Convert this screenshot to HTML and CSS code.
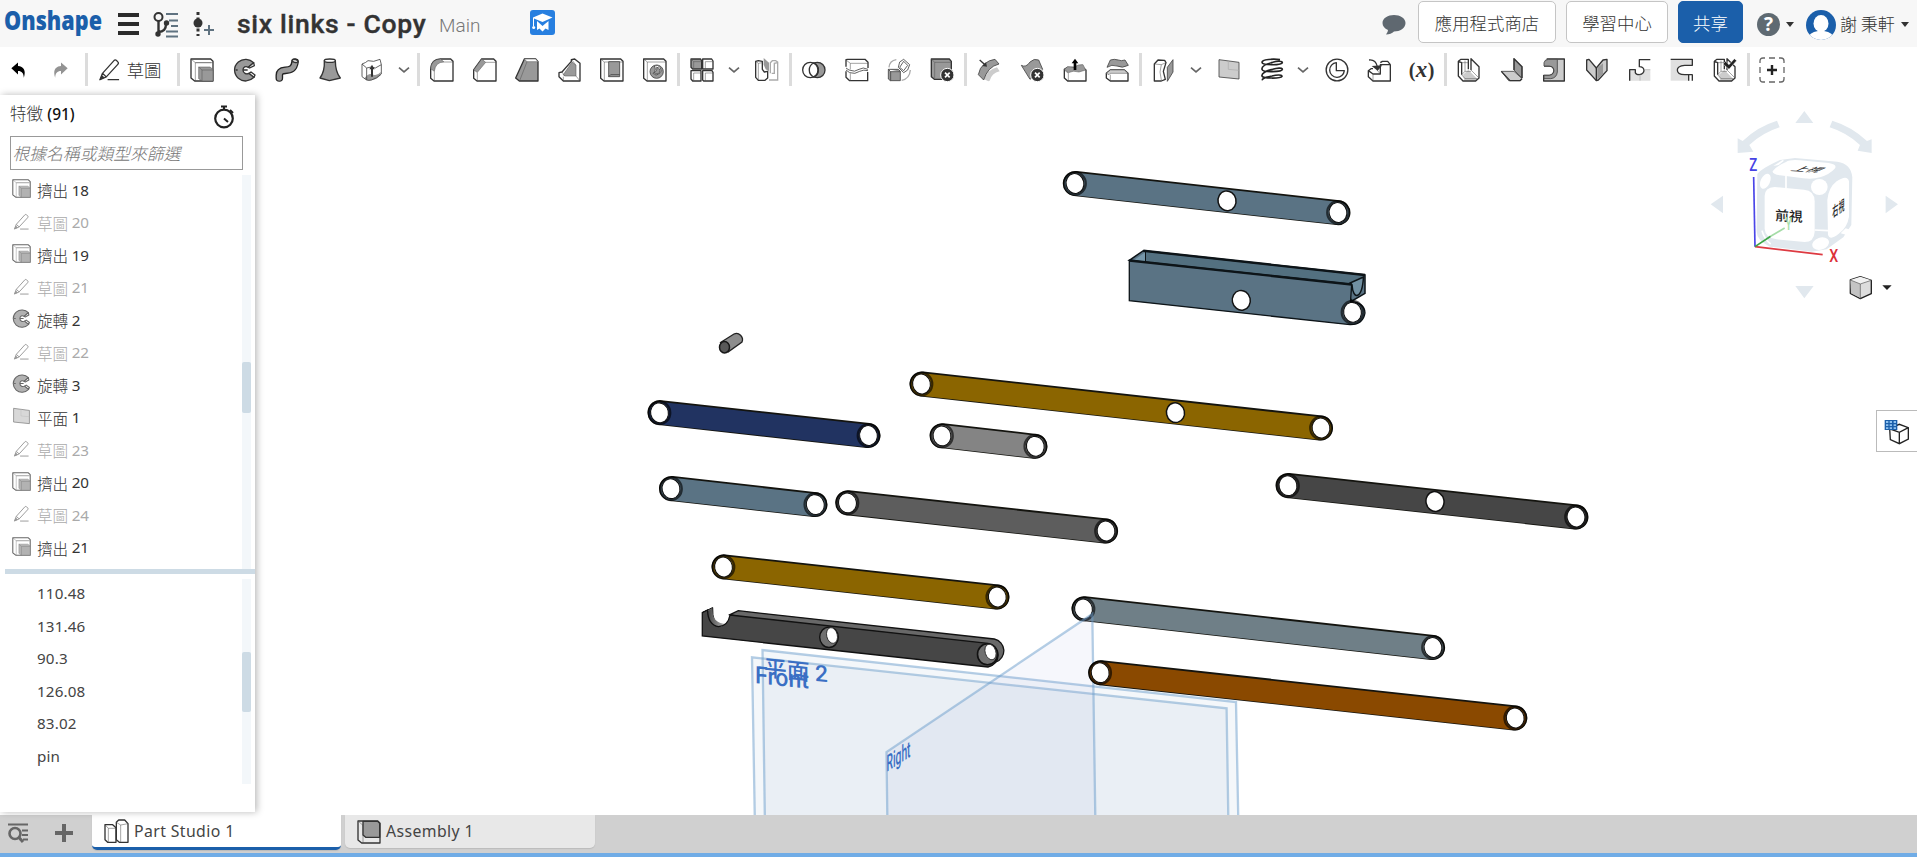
FILE: index.html
```html
<!DOCTYPE html>
<html lang="zh-Hant">
<head>
<meta charset="utf-8">
<title>six links - Copy</title>
<link rel="stylesheet" href="styles.css">
</head>
<body>
<svg class="defs" width="0" height="0">
<defs>
<symbol id="undo" viewBox="0 0 72 72"><path d="M12 30L36 9V22C56 23 66 38 57 64C56 48 50 40 36 40V52Z"/></symbol>
<symbol id="pencil" viewBox="0 0 72 72"><path class="k" d="M6 68L14 48L50 8Q54 4 58 8L62 12Q66 16 62 20L26 59ZM14 48L26 59M30 68H66"/><path class="d" d="M5 69L12 53L21 62Z"/></symbol>
<symbol id="extrude" viewBox="0 0 72 72"><path class="k" d="M3 3H62L69 10V69H14L3 60Z"/><path class="t" d="M3 3L16 14V69M16 14H69M16 14H64"/><path class="g t" d="M26 27H60L69 34V69H36L26 62Z"/><path class="t" d="M26 27L36 36V69M36 36H69"/></symbol>
<symbol id="revolve" viewBox="0 0 72 72"><path class="g k" d="M62 14C50 2 30 0 16 12C0 26 2 48 16 61C30 73 50 71 63 58L48 46C40 50 30 46 30 36C30 27 38 23 46 28Z"/><path class="w k" d="M62 14L64 23L50 30L46 28ZM48 46L54 42L66 51L63 58Z"/><path class="k" d="M30 36H44M8 36H14"/></symbol>
<symbol id="sweep" viewBox="0 0 72 72"><path class="o" d="M13 60V52C13 40 20 38 31 37C48 36 57 32 60 12"/><path class="i" d="M13 61V52C13 40 20 38 31 37C48 36 57 32 60 14"/><ellipse class="w k" cx="60" cy="9" rx="9" ry="4" transform="rotate(12 60 9)"/></symbol>
<symbol id="loft" viewBox="0 0 72 72"><path class="g k" d="M19 8C20 28 16 46 6 60L34 68L67 60C56 46 52 28 52 8Z"/><ellipse class="w k" cx="35.500" cy="8" rx="16.500" ry="5"/></symbol>
<symbol id="thicken" viewBox="0 0 72 72"><path class="g" d="M12 62Q26 42 40 50Q52 54 62 42V52Q46 68 26 68Z"/><path class="k2" d="M6 18Q18 14 24 8Q40 14 60 4L64 20V48M6 18V56L20 66M64 48Q50 62 34 66Q26 68 20 66"/><path class="k2" d="M6 18L20 30Q34 24 46 30L64 20M20 30V66"/><path class="d" d="M36 20L44 34H39V56H33V34H28Z"/></symbol>
<symbol id="fillet" viewBox="0 0 72 72"><path class="k" d="M2 32Q4 4 32 3H62L69 10V69H12L2 61Z"/><path class="g t" d="M2 32Q4 4 32 3L42 12Q16 12 13 40Z"/><path class="t" d="M13 40V69M42 12H69L62 3"/></symbol>
<symbol id="chamfer" viewBox="0 0 72 72"><path class="k" d="M2 36L26 3H62L69 10V69H12L2 61Z"/><path class="g t" d="M2 36L26 3L38 13L13 43Z"/><path class="t" d="M13 43V69M38 13H69L62 3"/></symbol>
<symbol id="draft" viewBox="0 0 72 72"><path class="g k" d="M28 3H62L69 11V69H13L2 60Z"/><path class="w t" d="M28 3H62L69 11H36Z"/><path class="t" d="M36 11L14 68"/></symbol>
<symbol id="rib" viewBox="0 0 72 72"><path class="k" d="M40 10L40 5L50 3L66 16V69H16L3 56V44L12 42Z"/><path class="g t" d="M16 50L42 12L54 22V54H20Z"/><path class="t" d="M54 22L42 6M54 54L66 69M12 42L20 54M16 69V56"/></symbol>
<symbol id="shell" viewBox="0 0 72 72"><path class="k" d="M2 3H62L69 10V69H12L2 61Z"/><path class="t" d="M2 3L13 12H69M13 12V69"/><path class="g k2" d="M26 11H59V56H26ZM26 56L32 50H59"/></symbol>
<symbol id="hole" viewBox="0 0 72 72"><path class="k" d="M2 3H62L69 10V69H12L2 61Z"/><path class="t" d="M2 3L13 12H69M13 12V69"/><circle class="g k2" cx="41" cy="41" r="20"/><path class="w k2" d="M34 24A14 14 0 1 1 30 46A17 17 0 0 0 34 24Z"/><path class="g k2" d="M41 28A10 10 0 1 1 33 44A14 14 0 0 0 41 28Z"/></symbol>
<symbol id="pattern" viewBox="0 0 72 72"><path class="g k" d="M3 3H32L35 9V33H8L3 28Z"/><path class="k" d="M38 3H65L69 9V33H38ZM3 38H33V69H8L3 63ZM38 38H66L69 43V69H41L38 66Z"/><path class="t" d="M3 3L11 11H35M11 11V33M46 11H69M46 11V33M11 45H33M11 45V69M46 45H69M46 45V69"/></symbol>
<symbol id="mirror" viewBox="0 0 72 72"><path class="g" d="M26 0L42 14V40L32 34L26 20Z"/><path class="k" d="M2 10L10 8L22 10V34L28 42L38 40V60L30 67H10L2 58Z"/><path class="t" d="M10 16V66M10 16L2 10M10 16L22 14"/><path class="f" d="M42 66H68V12L62 8H52L46 14V46M50 46H58V16L68 14"/></symbol>
<symbol id="boolean" viewBox="0 0 72 72"><circle class="g k" cx="46" cy="36" r="23"/><circle class="w k" cx="25" cy="36" r="23"/><path class="k" d="M35.500 15A23 23 0 0 0 35.500 57A23 23 0 0 0 35.500 15Z"/></symbol>
<symbol id="split" viewBox="0 0 72 72"><path class="k" d="M3 26V5L8 4H60L69 13V30M3 40V58L14 68H68V42"/><path class="t" d="M3 6L16 16H69M16 16V34M16 46V68"/><path class="k2" d="M3 30L12 36Q30 44 42 34Q54 26 69 34M3 36L14 44Q30 50 44 40Q56 34 69 38"/></symbol>
<symbol id="transform" viewBox="0 0 72 72"><path class="g k2" d="M4 34H34L40 40V68H10L4 63ZM4 34L11 41H40M11 41V68"/><path class="k2" d="M50 4L68 20L62 36L50 44L34 28L38 12ZM50 10L62 22L50 38L38 28Z"/><path class="f" d="M6 28Q8 8 28 5M70 36Q68 62 44 67"/></symbol>
<symbol id="delpart" viewBox="0 0 72 72"><path class="g k" d="M4 3H58L64 10V64H13L4 56Z"/><path class="t" d="M4 3L14 13H64M14 13V60"/><circle class="d" cx="52" cy="51" r="20" stroke="#fff" stroke-width="3"/><path class="x" d="M45 44L59 58M59 44L45 58"/></symbol>
<symbol id="moveface" viewBox="0 0 72 72"><path class="lg" d="M34 70L22 64Q30 36 60 28L68 40Q44 46 38 68Z"/><path class="g k2" d="M4 50Q8 28 22 18Q36 6 54 4L66 18Q32 26 20 66Z"/><path class="k" d="M8 6L24 20"/><path class="d" d="M30 26L16 24L27 13Z"/></symbol>
<symbol id="delface" viewBox="0 0 72 72"><path class="g k2" d="M4 22Q18 30 30 12Q42 0 56 6L68 34Q54 34 44 52L30 64Z"/><circle class="d" cx="52" cy="51" r="20" stroke="#fff" stroke-width="3"/><path class="x" d="M45 44L59 58M59 44L45 58"/></symbol>
<symbol id="replace" viewBox="0 0 72 72"><path class="k" d="M4 34L14 28H58L69 36V69H14L4 60Z"/><path class="g t" d="M4 34L14 26L32 28Q46 18 60 20L68 36L48 42Q30 36 16 44Z"/><path class="t" d="M4 36L16 46V69"/><path class="b" d="M36 2L46 16H40V36H32V16H26Z"/></symbol>
<symbol id="offset" viewBox="0 0 72 72"><path class="k" d="M4 46L16 36H58L69 46V69H16L4 60Z"/><path class="lg t" d="M4 46L16 36H58L69 46H16L12 50Z"/><path class="g k2" d="M6 28L16 6Q28 2 40 6Q48 10 60 6L70 22Q52 32 36 24Q20 18 6 28Z"/><path class="t" d="M16 50V69"/></symbol>
<symbol id="splitpart" viewBox="0 0 72 72"><path class="k" d="M7 18L18 6L38 7L42 14L34 40L40 64L28 69H7Z"/><path class="t" d="M7 18L28 20L42 14M28 20L24 42L28 66"/><path class="g k2" d="M46 28L63 5V42L46 70Z"/></symbol>
<symbol id="plane" viewBox="0 0 72 72"><path class="lg k2" d="M6 5L66 13V63L6 57Z"/><path class="f2" d="M34 9V34L66 37"/></symbol>
<symbol id="helix" viewBox="0 0 72 72"><path class="h" d="M60 5C40 2 6 4 6 13C6 23 66 22 67 14C67 8 50 9 38 13C18 18 4 24 6 34C8 44 66 42 67 34C67 28 50 30 38 34C18 38 4 46 6 54C8 62 62 62 66 55C66 49 48 51 36 54C18 58 4 62 8 67"/></symbol>
<symbol id="clock" viewBox="0 0 72 72"><circle class="k" cx="36" cy="36" r="32.500"/><path class="k" d="M34 14V38H58A22 22 0 1 1 34 14Z"/></symbol>
<symbol id="derived" viewBox="0 0 72 72"><path class="k" d="M18 69L4 56V38L18 48H40V20H70V69ZM4 38L12 32H18M40 14L46 10H62L70 20"/><path class="t" d="M40 48L30 36M18 48V69"/><path class="k" d="M6 6Q26 4 31 26"/><path class="d" d="M14 24L46 22L32 38Z"/></symbol>
<symbol id="sheet" viewBox="0 0 72 72"><path class="lg" d="M18 50L34 36L62 64L56 68H22Z"/><path class="k" d="M4 10L12 4H34V34M42 36V2L66 26V60L56 69H18L4 54V10L14 14V50"/><path class="t" d="M14 14H34M24 8V40L14 50L24 62H60M42 36L66 60M24 40H42"/></symbol>
<symbol id="flange" viewBox="0 0 72 72"><path class="g k2" d="M42 2L66 26V60L42 36Z"/><path class="k" d="M42 36V2L66 26V60"/><path class="lg k2" d="M4 40H42L66 62L60 68H26Z"/><path class="k" d="M4 40L30 68H60L66 62"/></symbol>
<symbol id="hem" viewBox="0 0 72 72"><path class="lg k" d="M14 3H67V69H5V52H22Q36 50 36 36Q34 24 22 24H6"/><path class="g k2" d="M6 24V14Q8 4 20 4H46V42Q44 60 26 62H6V52H22Q36 50 36 36Q34 24 22 24Z"/></symbol>
<symbol id="bend" viewBox="0 0 72 72"><path class="lg k" d="M5 6L12 4L34 30L54 6L66 4V38L40 66L34 68L5 36Z"/><path class="k" d="M34 30V68"/><path class="g" d="M37 30L54 16V48L37 64Z"/></symbol>
<symbol id="tab" viewBox="0 0 72 72"><path class="lg" opacity=".6" d="M5 35H22Q24 50 34 50Q48 48 48 35H67V68H5Z"/><path class="k" d="M5 68V35H22V44Q24 50 34 50Q48 48 48 36Q46 26 34 26V5H67"/><path class="f2" d="M36 50V68M48 35H67"/></symbol>
<symbol id="relief" viewBox="0 0 72 72"><path class="lg" opacity=".6" d="M2 4H67V68H2Z"/><path class="w" d="M68 22H44Q22 24 22 36Q22 50 44 50H56V68H68Z"/><path class="k" d="M2 4H67V22H44Q22 24 22 36Q22 50 44 50H68M56 50V68M67 50V68"/></symbol>
<symbol id="finish" viewBox="0 0 72 72"><use href="#sheet"/><path d="M30 18L38 10L48 20L64 2L71 8L48 34Z" fill="#222" stroke="#fff" stroke-width="1.500"/></symbol>
<symbol id="chev" viewBox="0 0 36 36"><path d="M3 11L18 24L33 11" fill="none" stroke="#666" stroke-width="5"/></symbol>
</defs>
</svg>

<div class="app">
<header class="top">
  <svg class="logo" width="104" height="40"><text x="0" y="27" textLength="98" lengthAdjust="spacingAndGlyphs">Onshape</text></svg>
  <svg class="burger" width="21" height="22"><path d="M0 2H21M0 11H21M0 20H21" stroke="#2b2b2b" stroke-width="4.200"/></svg>
  <svg class="tree" width="26" height="26" fill="none"><circle cx="5.500" cy="5" r="4" stroke="#333" stroke-width="2"/><path d="M5.500 9V22M5.500 20Q13 20 13 12" stroke="#333" stroke-width="2.400"/><circle cx="5" cy="22" r="2.700" fill="#333"/><circle cx="13.500" cy="11" r="2.700" fill="#333"/><path d="M13 2H25M16 8.500H25M18 14H25M13 19.500H25M13 24.500H25" stroke="#5f7280" stroke-width="2"/></svg>
  <svg class="version" width="22" height="26"><circle cx="5" cy="11" r="4.500" fill="#333"/><path d="M5 0V24" stroke="#333" stroke-width="3" stroke-dasharray="3 2.500"/><path d="M11 18H21M16 13V23" stroke="#5f7280" stroke-width="2"/></svg>
  <h1>six links - Copy</h1>
  <span class="branch">Main</span>
  <svg class="learn" width="25" height="25"><rect width="25" height="25" rx="3" fill="#277fe0"/><path d="M12.500 3.500L22.500 7.500L12.500 12L4 8.500V16H3V7.500Z" fill="#fff"/><path d="M7 11V20L9.500 18.500L12.500 21.500L15.500 18.500L18.500 20V11L12.500 16Z" fill="#fff"/><circle cx="3.700" cy="17.500" r="1.500" fill="#fff"/></svg>
  <div class="spacer"></div>
  <svg class="chat" width="24" height="22"><path d="M12 1C18 1 23.500 4 23.500 9S18 17.500 12 17.500Q9 20.500 4 20.500Q6 18 6 16C2.500 14.500 .5 12 .5 9C.5 4 6 1 12 1Z" fill="#5f6870"/></svg>
  <button class="btn store">應用程式商店</button>
  <button class="btn learnbtn">學習中心</button>
  <button class="btn share">共享</button>
  <span class="help">?</span><i class="caret"></i>
  <svg class="avatar" width="30" height="30"><clipPath id="av"><circle cx="15" cy="15" r="15"/></clipPath><g clip-path="url(#av)"><rect width="30" height="30" fill="#1b5faa"/><ellipse cx="15" cy="13.500" rx="7.500" ry="8.500" fill="#fff"/><path d="M1 30Q3 22 12 21H18Q27 22 29 30Z" fill="#fff"/></g></svg>
  <span class="user">謝 秉軒</span><i class="caret"></i>
</header>

<nav class="toolbar">
  <span class="t1 small"><svg><use href="#undo"/></svg></span>
  <span class="t1 small redo"><svg><use href="#undo"/></svg></span>
  <i class="sep"></i>
  <span class="sketch"><svg><use href="#pencil"/></svg>草圖</span>
  <i class="sep"></i>
  <span class="t1"><svg><use href="#extrude"/></svg></span><span class="t1"><svg><use href="#revolve"/></svg></span><span class="t1"><svg><use href="#sweep"/></svg></span><span class="t1"><svg><use href="#loft"/></svg></span><span class="t1"><svg><use href="#thicken"/></svg></span><span class="drop"><svg><use href="#chev"/></svg></span>
  <i class="sep"></i>
  <span class="t1"><svg><use href="#fillet"/></svg></span><span class="t1"><svg><use href="#chamfer"/></svg></span><span class="t1"><svg><use href="#draft"/></svg></span><span class="t1"><svg><use href="#rib"/></svg></span><span class="t1"><svg><use href="#shell"/></svg></span><span class="t1"><svg><use href="#hole"/></svg></span>
  <i class="sep"></i>
  <span class="t1"><svg><use href="#pattern"/></svg></span><span class="drop"><svg><use href="#chev"/></svg></span><span class="t1"><svg><use href="#mirror"/></svg></span>
  <i class="sep"></i>
  <span class="t1"><svg><use href="#boolean"/></svg></span><span class="t1"><svg><use href="#split"/></svg></span><span class="t1"><svg><use href="#transform"/></svg></span><span class="t1"><svg><use href="#delpart"/></svg></span>
  <i class="sep"></i>
  <span class="t1"><svg><use href="#moveface"/></svg></span><span class="t1"><svg><use href="#delface"/></svg></span><span class="t1"><svg><use href="#replace"/></svg></span><span class="t1"><svg><use href="#offset"/></svg></span>
  <i class="sep"></i>
  <span class="t1"><svg><use href="#splitpart"/></svg></span><span class="drop"><svg><use href="#chev"/></svg></span><span class="t1"><svg><use href="#plane"/></svg></span><span class="t1"><svg><use href="#helix"/></svg></span><span class="drop"><svg><use href="#chev"/></svg></span><span class="t1"><svg><use href="#clock"/></svg></span><span class="t1"><svg><use href="#derived"/></svg></span><span class="t1 var">(<em>x</em>)</span>
  <i class="sep"></i>
  <span class="t1"><svg><use href="#sheet"/></svg></span><span class="t1"><svg><use href="#flange"/></svg></span><span class="t1"><svg><use href="#hem"/></svg></span><span class="t1"><svg><use href="#bend"/></svg></span><span class="t1"><svg><use href="#tab"/></svg></span><span class="t1"><svg><use href="#relief"/></svg></span><span class="t1"><svg><use href="#finish"/></svg></span>
  <i class="sep"></i>
  <span class="t1"><svg class="add" viewBox="0 0 26 26"><path d="M1 6V4Q1 1 4 1H6M10 1H16M20 1H22Q25 1 25 4V6M25 10V16M25 20V22Q25 25 22 25H20M16 25H10M6 25H4Q1 25 1 22V20M1 16V10" fill="none" stroke="#666" stroke-width="1.300"/><path d="M8 13H18M13 8V18" stroke="#222" stroke-width="2.400"/></svg></span>
</nav>

<main class="work">
  <aside class="side">
    <div class="sidehead"><span>特徵 <b>(91)</b></span><svg width="22" height="24" fill="none" stroke="#222"><circle cx="11" cy="13.500" r="8.800" stroke-width="2.200"/><path d="M8 1.500H14M11 2V5M17 5L20 8M11 13.500L15 17" stroke-width="2"/></svg></div>
    <input class="filter" placeholder="根據名稱或類型來篩選">
    <div class="pane features">
      <ul>
        <li><svg><use href="#extrude"/></svg>擠出 <span>18</span></li>
        <li class="off"><svg><use href="#pencil"/></svg>草圖 <span>20</span></li>
        <li><svg><use href="#extrude"/></svg>擠出 <span>19</span></li>
        <li class="off"><svg><use href="#pencil"/></svg>草圖 <span>21</span></li>
        <li><svg><use href="#revolve"/></svg>旋轉 <span>2</span></li>
        <li class="off"><svg><use href="#pencil"/></svg>草圖 <span>22</span></li>
        <li><svg><use href="#revolve"/></svg>旋轉 <span>3</span></li>
        <li><svg><use href="#plane"/></svg>平面 <span>1</span></li>
        <li class="off"><svg><use href="#pencil"/></svg>草圖 <span>23</span></li>
        <li><svg><use href="#extrude"/></svg>擠出 <span>20</span></li>
        <li class="off"><svg><use href="#pencil"/></svg>草圖 <span>24</span></li>
        <li><svg><use href="#extrude"/></svg>擠出 <span>21</span></li>
      </ul>
      <div class="track"><div class="thumb"></div></div>
    </div>
    <div class="divider"></div>
    <div class="pane parts">
      <ul><li>110.48</li><li>131.46</li><li>90.3</li><li>126.08</li><li>83.02</li><li>pin</li></ul>
      <div class="track"><div class="thumb"></div></div>
    </div>
  </aside>

  <section class="canvas">
  <svg class="scene" viewBox="255 95 1662 720" width="1662" height="720">
    <defs>
      <g id="ring"><ellipse cx="0" cy="0" rx="10.800" ry="11.400" fill="none" stroke="#000" stroke-opacity=".62" stroke-width="2.200"/><ellipse rx="8.900" ry="10" fill="#fff" stroke="#111" stroke-width="1.100" transform="rotate(-12)"/></g>
      <g id="mid"><ellipse rx="9" ry="9.900" fill="#fff" stroke="#111" stroke-width="1.500" transform="rotate(-12)"/></g>
      <linearGradient id="bore"><stop offset="0" stop-color="#444"/><stop offset="1" stop-color="#bbb"/></linearGradient>
    </defs>
    <!-- straight links: outline, face, bores -->
    <g class="link">
      <path class="e" d="M1075.300 183.500L1338 212.700"/><path d="M1075.300 184L1338 213.200" stroke="#5a7384"/>
      <path class="e" d="M922 384L1320.500 428"/><path d="M922 384.500L1320.500 428.500" stroke="#8b6500"/>
      <path class="e" d="M660 412.600L868 435.500"/><path d="M660 413.100L868 436" stroke="#213361"/>
      <path class="e" d="M942 435.700L1035 446.300"/><path d="M942 436.200L1035 446.800" stroke="#848484"/>
      <path class="e" d="M671.500 488.500L815 504.600"/><path d="M671.500 489L815 505.100" stroke="#5a7384"/>
      <path class="e" d="M847.700 502.700L1105.600 531"/><path d="M847.700 503.200L1105.600 531.500" stroke="#5d5d5d"/>
      <path class="e" d="M1288 485.500L1576 517"/><path d="M1288 486L1576 517.500" stroke="#464646"/>
      <path class="e" d="M724 566.800L997 597"/><path d="M724 567.300L997 597.500" stroke="#8b6500"/>
      <path class="e" d="M1084 608.700L1432.600 647.500"/><path d="M1084 609.200L1432.600 648" stroke="#6f7f87"/>
    </g>
    <use href="#ring" x="1075" y="183.500"/><use href="#mid" x="1227" y="200.800"/><use href="#ring" x="1338" y="212.500"/>
    <use href="#ring" x="921.500" y="384"/><use href="#mid" x="1175.500" y="412.700"/><use href="#ring" x="1321" y="428"/>
    <use href="#ring" x="659.500" y="412.800"/><use href="#ring" x="868.500" y="435.500"/>
    <use href="#ring" x="942" y="435.900"/><use href="#ring" x="1035.300" y="446.300"/>
    <use href="#ring" x="671" y="488.700"/><use href="#ring" x="815.300" y="504.600"/>
    <use href="#ring" x="847.500" y="502.900"/><use href="#ring" x="1106" y="531"/>
    <use href="#ring" x="1288" y="485.700"/><use href="#mid" x="1435" y="501.500"/><use href="#ring" x="1576" y="517"/>
    <use href="#ring" x="723.500" y="567"/><use href="#ring" x="997.300" y="597"/>
    <use href="#ring" x="1083.500" y="609"/><use href="#ring" x="1433" y="647.500"/>
    <!-- channel -->
    <path d="M1129.300 260.300L1143.300 250.700L1365 275V293.300L1352 301L1340 284Z" fill="#5a7384" stroke="#0d1418" stroke-width="1.500"/>
    <path d="M1134 260L1145.500 252V262Z" fill="#7697aa"/>
    <path d="M1145.500 252V262L1346 284L1363 276Z" fill="#537080"/>
    <path d="M1145.500 252V262" stroke="#0d1418" stroke-width="1"/>
    <path d="M1143.300 250.700L1365 275" stroke="#0d1418" stroke-width="2.400"/>
    <path d="M1352 285C1353 300 1362 300 1363.500 277L1350 283Z" fill="#7190a2" stroke="#0d1418" stroke-width="1.500"/>
    <path d="M1129.300 260.300L1351.700 284.300L1350.500 301.500Q1365 303 1365 313Q1363 325 1350 324.700L1129.300 300.700Z" fill="#5a7384" stroke="#0d1418" stroke-width="1.300"/>
    <path d="M1129.300 260.500L1351.700 284.500" stroke="#0d1418" stroke-width="2.400"/>
    <use href="#mid" x="1241.300" y="300.300"/><use href="#ring" x="1352.500" y="312.300"/>
    <!-- pin -->
    <path d="M720.500 342.500L734 334A5.500 6 -30 0 1 742 342L728 352Z" fill="#8d8d8d" stroke="#222" stroke-width="1.300"/>
    <ellipse cx="724.500" cy="347.300" rx="5" ry="5.700" fill="#595959" stroke="#181818" stroke-width="1.500"/>
    <!-- notched link -->
    <path d="M730 614.700L738.300 610.700L994.300 639A12 12 0 0 1 996 662L985 666Z" fill="#686868" stroke="#111" stroke-width="1.300"/>
    <path d="M702.300 612.700L712.700 607.500Q712 624 721 626L716 629Q704 624 706 611Z" fill="#777" stroke="#111"/>
    <path d="M712 608.500Q712 624 727 624L718 627.500Q706 624 708 611Z" fill="url(#bore)"/>
    <path d="M702.300 612.700L707.500 610Q708 625 718.500 626.700Q728 626 730 615L988 643.300A12 12 0 0 1 988 667L702.300 636Z" fill="#464646" stroke="#111" stroke-width="1.300"/>
    <g><ellipse cx="829" cy="637.300" rx="9.300" ry="10.200" fill="#707070" stroke="#111" stroke-width="1.400"/><ellipse cx="832" cy="635.500" rx="5.300" ry="8" fill="#fff" stroke="#222" stroke-width=".8" transform="rotate(-14 832 635.500)"/></g>
    <g><ellipse cx="987.500" cy="654.300" rx="10" ry="10.500" fill="#707070" stroke="#111" stroke-width="1.600"/><ellipse cx="990.500" cy="652" rx="5.300" ry="8" fill="#fff" stroke="#222" stroke-width=".8" transform="rotate(-18 990.500 652)"/></g>
    <!-- reference planes -->
    <g fill="#8fb4cc" fill-opacity=".1" stroke="#6c9dcc" stroke-opacity=".5" stroke-width="2.300">
      <path d="M755 830L752 657.300L1226.600 708.300L1228.500 830"/>
      <path d="M765 830L762.500 650L1236 702L1238.500 830"/>
      <path d="M887.500 830L886.500 752L1092.300 614L1095.500 830" fill="#98a8e0" fill-opacity=".09"/>
    </g>
    <g class="ptext">
      <text transform="translate(755 683) skewY(6)" font-size="24" textLength="54" lengthAdjust="spacingAndGlyphs">Front</text>
      <text transform="translate(764 675.500) skewY(6)" font-size="22.500" textLength="64" lengthAdjust="spacingAndGlyphs">平面 2</text>
      <text transform="translate(886.500 772) skewY(-33)" font-size="23" textLength="24" lengthAdjust="spacingAndGlyphs">Right</text>
    </g>
    <g class="link"><path class="e" d="M1100.600 672.700L1514.900 718"/><path d="M1100.600 673.200L1514.900 718.500" stroke="#8a4900"/></g>
    <use href="#ring" x="1100.200" y="672.700"/><use href="#ring" x="1515.200" y="718"/>
    <!-- view cube -->
    <g transform="translate(1680 100) scale(.3333)">
      <g fill="#e1e8ee">
        <path d="M373 33L400 69H346ZM373 595L401 558H346ZM92 313L129 287V340ZM654 313L617 287V340Z"/>
        <path d="M291 62L299 82Q248 98 208 135L220 155L173 159V115L188 123Q232 80 291 62ZM457 62L449 82Q500 98 540 135L533 152L575 159V118L561 123Q516 80 457 62Z"/>
        <path d="M232 222Q244 206 300 180L345 174L472 185Q514 192 517 232L514 375L490 412L440 448L395 455L270 440Q228 420 230 390Z"/>
      </g>
      <g fill="#fff">
        <path d="M278 214Q286 200 318 186Q330 178 360 181L446 189Q474 194 464 206Q450 222 420 232Q400 238 370 235L300 226Q276 222 278 214Z"/>
        <path d="M254 288Q254 262 284 261L372 269Q404 272 404 304V396Q402 426 374 426L290 418Q256 414 254 386Z"/>
        <path d="M442 300Q446 262 470 244Q502 222 507 244V350Q502 382 478 400Q450 424 444 404Z"/>
        <ellipse cx="256" cy="244" rx="14" ry="24" transform="rotate(25 256 244)"/><ellipse cx="418" cy="261" rx="25" ry="24"/><ellipse cx="422" cy="431" rx="26" ry="18" transform="rotate(-18 422 431)"/>
        <path d="M312 182L296 195L280 198L308 180ZM497 385L520 392L500 405L482 400Z"/>
      </g>
      <path d="M318 228V264M404 390L444 392M246 392Q252 416 272 432" stroke="#fff" stroke-width="5" fill="none"/>
      <g class="cubetext" font-size="41"><text transform="translate(286 361) skewY(3)">前視</text><text transform="matrix(1 .06 -.9 .42 330 212)" font-size="41">上視</text><text transform="matrix(.48 -.34 0 1.150 457 354)" font-size="38">右視</text></g>
      <path d="M221 231L225 440" stroke="#4a46e8" stroke-width="5"/><path d="M225 440L428 464" stroke="#dd3a42" stroke-width="5"/><path d="M225 440L272 409" stroke="#3da544" stroke-width="5"/><path d="M272 409L314 384" stroke="#a5dca7" stroke-width="5"/>
      <g class="axis"><text x="208" y="214" textLength="24" lengthAdjust="spacingAndGlyphs" fill="#4643e4">Z</text><text x="448" y="487" textLength="27" lengthAdjust="spacingAndGlyphs" fill="#dc3038">X</text><text x="316" y="390" font-size="42" fill="#a9dfab" textLength="20" lengthAdjust="spacingAndGlyphs">Y</text></g>
      <g stroke="#222" stroke-width="4" stroke-linejoin="round"><path d="M511 540L541 530L574 541V581L541 596L511 580Z" fill="#ddd"/></g><path d="M511 540L541 530L574 541L541 552Z" fill="#f2f2f2"/><path d="M511 541L541 552V594L513 580Z" fill="#c4c4c4"/><path d="M511 540L541 552L574 541M541 552V596" stroke="#555" stroke-width="2" fill="none"/>
      <path d="M607 556H635L621 570Z" fill="#222"/>
    </g>
  </svg>
  <button class="tables"><svg width="28" height="28" viewBox="0 0 84 84"><path d="M26 28L55 16L82 26V60L55 74L28 62ZM28 30L55 40L82 26M55 40V74" fill="#fff" stroke="#222" stroke-width="4"/><path d="M11 3H49V33H11Z" fill="#1b5faa"/><path d="M15 6H22V12H15ZM26 6H33V12H26ZM38 6H45V12H38ZM15 16H22V21H15ZM26 16H33V21H26ZM38 16H45V21H38ZM15 25H22V30H15ZM26 25H33V30H26ZM38 25H45V30H38Z" fill="#8ec1ef"/></svg></button>
  </section>
</main>

<footer class="tabs">
  <svg class="find" width="21" height="20" fill="none" stroke="#666"><path d="M0 1.500H20M14 7.500H20M14 12H20M15 16.500H20" stroke-width="2.200"/><circle cx="7" cy="10.500" r="5.500" stroke-width="2.600"/><path d="M11 14.500L15 19" stroke-width="3"/></svg>
  <svg class="plus" width="18" height="18"><path d="M0 9H18M9 0V18" stroke="#666" stroke-width="4"/></svg>
  <div class="tab active"><svg width="25" height="25" viewBox="0 0 75 75"><path class="k" d="M3 17H26L36 26V70H11L3 62Z"/><path class="t" d="M3 17L13 28V70M13 28H36L36 26"/><path class="k" d="M37 10L44 3H62L72 14V70H46L37 62Z"/><path class="t" d="M37 10L50 18V69M50 18L72 14"/></svg><span>Part Studio 1</span></div>
  <div class="tab"><svg width="24" height="24" viewBox="0 0 72 72"><path class="k" d="M3 3H62L69 10V69H14L3 60Z"/><path class="t" d="M3 3L18 16V69M18 16H69"/><path class="g k" d="M18 4H62L68 10V52H26L18 45Z"/></svg><span>Assembly 1</span></div>
</footer>
<div class="bottom"></div>
</div>
</body>
</html>
```
FILE: styles.css
```css
* { box-sizing: border-box; }
body { margin: 0; background: #fff; color: #333; font-family: "Noto Sans", "Noto Sans CJK TC", sans-serif; overflow: hidden; }
.defs { position: absolute; }
.app { display: flex; flex-direction: column; width: 1917px; height: 857px; }
svg { display: block; flex: none; }

/* icon strokes and fills */
.k { fill: none; stroke: #333; stroke-width: 4; stroke-linejoin: round; }
.k2 { fill: none; stroke: #444; stroke-width: 2.5; }
.t { fill: none; stroke: #555; stroke-width: 1.6; }
.g { fill: #999; }
.lg { fill: #ccc; }
.w { fill: #fff; }
.d { fill: #333; }
.b { fill: #000; }
.f { fill: none; stroke: #aaa; stroke-width: 4; }
.f2 { fill: none; stroke: #aaa; stroke-width: 2; }
.x { stroke: #fff; stroke-width: 5; }
.o { fill: none; stroke: #222; stroke-width: 23; stroke-linecap: round; }
.i { fill: none; stroke: #999; stroke-width: 15; stroke-linecap: round; }
.h { fill: none; stroke: #222; stroke-width: 5; }

.top { height: 47px; flex: none; display: flex; align-items: center; background: #f7f7f7; }
.logo { margin: -1px 0 0 4px; overflow: visible; }
.logo text { font: 800 26px "Open Sans", "Noto Sans", sans-serif; fill: #1b5faa; }
.burger { margin-left: 10px; margin-top: 1px; }
.tree { margin-left: 14px; margin-top: 2px; }
.version { margin-left: 14px; margin-top: 3px; }
h1 { margin: 0 0 0 22px; width: 194px; font: 500 26.5px/46px Roboto, sans-serif; letter-spacing: .7px; color: #333; -webkit-text-stroke: .4px #333; white-space: nowrap; }
.branch { margin: 5px 0 0 8px; width: 44px; font: 300 19px/40px Roboto, sans-serif; color: #777; }
.learn { margin-left: 47px; margin-top: -2px; }
.spacer { flex: 1; }
.chat { margin-right: 12px; margin-top: 2px; }
.btn { height: 42px; margin: -3px 10px 0 0; padding: 0; border: 1px solid #c5c5c5; border-radius: 5px; background: #fff; color: #333; font: 300 17.4px "Noto Sans CJK TC", sans-serif; white-space: nowrap; }
.store { width: 138px; }
.learnbtn { width: 102px; }
.share { width: 65px; background: #1b5faa; border-color: #1b5faa; color: #fff; margin-right: 14px; }
.help { width: 23px; height: 23px; margin-top: 2px; border-radius: 50%; background: #5f6a72; color: #fff; font: 700 19px/23px "Open Sans", sans-serif; text-align: center; }
.caret { width: 0; border: 4.5px solid transparent; border-top: 5px solid #333; border-bottom: 0; margin-left: 6px; margin-top: 1px; }
.avatar { margin-left: 12px; margin-top: 2px; }
.user { margin-left: 4px; width: 57px; font: 300 17px "Noto Sans CJK TC", sans-serif; white-space: nowrap; }
.user + .caret { margin-left: 4px; margin-right: 8px; }

.toolbar { height: 48px; flex: none; display: flex; align-items: center; padding: 0 0 3px 0; background: #fff; }
.toolbar svg { width: 24px; height: 24px; }
.t1 { width: 42.6px; flex: none; display: flex; justify-content: center; }
.toolbar .small svg { width: 20px; height: 20px; }
.small:first-child { width: 39px; }
.small:first-child svg { margin-right: 3px; }
.redo { width: 45px; transform: scaleX(-1); opacity: .42; }
.drop { width: 22.2px; flex: none; display: flex; justify-content: center; }
.toolbar .drop svg { width: 12px; height: 12px; margin-right: 2px; }
.sep { width: 3px; height: 33px; margin: 0 .87px; background: #dcdcdc; flex: none; }
.sketch { display: flex; align-items: center; width: 87.3px; padding-left: 9px; gap: 6px; font: 300 17.4px "Noto Sans CJK TC", sans-serif; }
.sketch svg { width: 23px; height: 23px; }
.var { font: 700 20px/24px "Liberation Serif", serif; color: #333; letter-spacing: .5px; }
.var em { font-size: 23px; }
.toolbar .add { width: 26px; height: 26px; }

.work { height: 720px; flex: none; display: flex; }
.side { width: 255px; height: 717px; flex: none; background: #fff; box-shadow: 2px 0 7px rgba(0,0,0,.28); position: relative; z-index: 1; }
.sidehead { height: 41px; display: flex; justify-content: space-between; align-items: center; padding: 2px 20px 0 10px; font: 300 16.5px/20px "Noto Sans", "Noto Sans CJK TC", sans-serif; }
.sidehead span { margin-top: -5px; }
.sidehead b { font-size: 15.5px; font-weight: 500; color: #111; }
.filter { display: block; width: 233px; height: 34px; margin-left: 9.500px; padding: 2px; border: 1px solid #999; font: italic 300 16.8px "Noto Sans CJK TC", sans-serif; }
.filter::placeholder { color: #777; }
.pane { display: flex; justify-content: space-between; padding-right: 4px; }
.pane ul { list-style: none; margin: 0; padding: 0; }
.pane li { display: flex; align-items: center; height: 32.5px; font-size: 15.2px; white-space: pre; }
.features { height: 394px; margin-top: 5px; }
.features ul { margin-top: -1px; }
.features li { padding-left: 12px; font-family: "Noto Sans CJK TC", sans-serif; font-weight: 300; font-size: 15.6px; }
.features li span { font-family: "Noto Sans", sans-serif; font-weight: 400; font-size: 15.2px; margin-top: -1px; }
.features li svg { width: 19px; height: 19px; margin: -3px 6px 0 0; opacity: .75; }
.features li.off { color: #aaa; }
.features li.off svg { width: 17px; margin: -3px 7px 0 1px; opacity: .5; }
.track { width: 9px; background: #f3f7fa; }
.thumb { width: 9px; border-radius: 2px; background: #cddbe5; }
.features .thumb { height: 51px; margin-top: 187px; }
.divider { height: 5px; margin-left: 5px; background: #cddbe5; }
.parts { height: 210px; padding-top: 5px; padding-left: 37px; }
.parts li { letter-spacing: .15px; color: #444; }
.parts .thumb { height: 60px; margin-top: 73px; }
.parts ul { margin-top: -2px; }
.canvas { width: 1662px; position: relative; }
.link path { fill: none; stroke-width: 22.4; stroke-linecap: round; }
.link .e { stroke: #14140f; stroke-width: 25; }
.ptext text { fill: #3a6fc4; font-family: Roboto, "Noto Sans CJK TC", sans-serif; font-weight: 500; }
.cubetext text { fill: #222; font-family: "Noto Sans CJK TC", sans-serif; font-weight: 500; }
.axis text { font-family: Roboto, sans-serif; font-size: 54px; font-weight: 500; }
.tables { position: absolute; right: 0; top: 315px; width: 41px; height: 42px; padding: 4px 0 0 4px; border: 1px solid #bbb; border-right: 0; background: #fff; }

.tabs { height: 38px; flex: none; display: flex; background: #d0d0d0; }
.find { margin: 8px 0 0 8px; }
.plus { margin: 9px 0 0 26px; }
.tab { width: 250px; height: 33px; margin-left: 4px; padding-left: 12px; display: flex; align-items: center; gap: 5px; background: #e8e8e8; border-radius: 0 0 5px 5px; font-size: 15.8px; letter-spacing: .4px; color: #444; box-shadow: 0 1px 1px #bbb; }
.tab span { margin-top: -1px; }
.tab.active { width: 249px; height: 35px; margin-left: 19px; background: #fff; border-bottom: 3px solid #1b5faa; }
.bottom { height: 4px; background: #70ace6; }
```
